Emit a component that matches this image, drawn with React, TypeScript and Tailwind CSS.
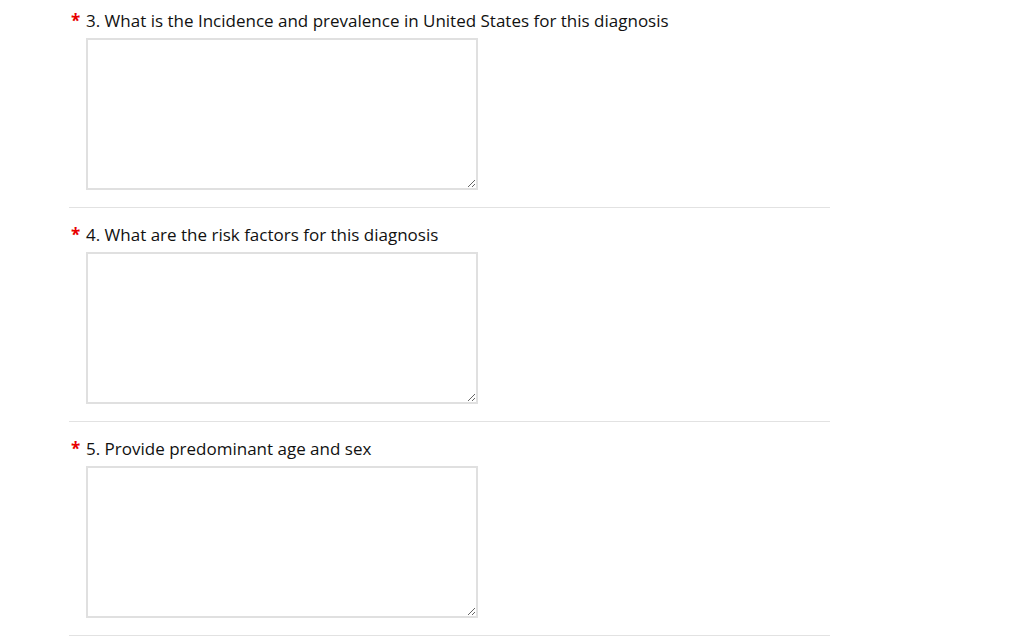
const questions = [
  '3. What is the Incidence and prevalence in United States for this diagnosis',
  '4. What are the risk factors for this diagnosis',
  '5. Provide predominant age and sex',
];

export default function App() {
  return (
    <div className="min-h-screen bg-white" style={{ fontFamily: '"Open Sans", sans-serif' }}>
      <div className="ml-[69px] w-[761px]">
        {questions.map((q, i) => (
          <div key={i} className="pt-4 first:pt-[10px] pb-[17px] border-b border-[#e2e2e2]">
            <div className="flex items-center text-[17px] leading-[22px] text-[#111]">
              <span className="w-[17px] pl-[2px] text-[#e80000] font-bold">*</span>
              <span>{q}</span>
            </div>
            <textarea
              className="block mt-[6px] ml-[17px] w-[392px] h-[152px] border-2 border-[#e0e0e0] outline-none p-2"
            />
          </div>
        ))}
      </div>
    </div>
  );
}
